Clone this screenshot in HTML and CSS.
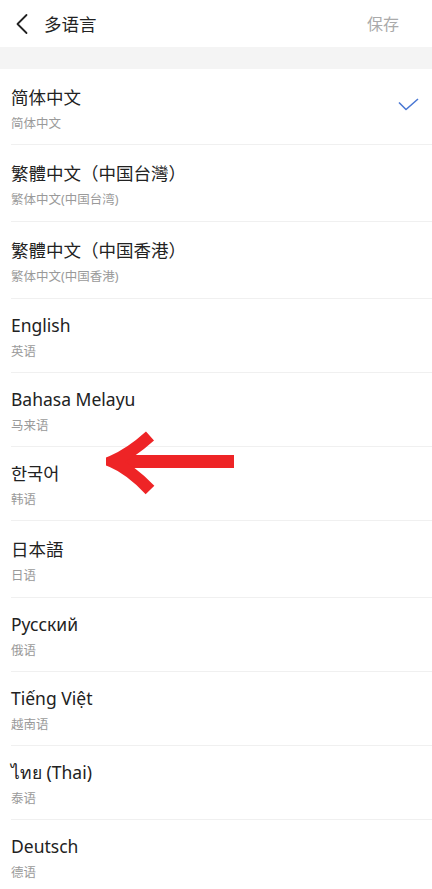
FILE: index.html
```html
<!DOCTYPE html>
<html lang="zh-CN">
<head>
<meta charset="utf-8">
<title>多语言</title>
<link rel="stylesheet" href="styles.css">
</head>
<body>
<div class="page">
  <header class="header">
    <div class="header-left">
      <svg class="back" width="14" height="22" viewBox="0 0 14 22"><polyline points="11.5,2 2.5,11 11.5,20" fill="none" stroke="#222" stroke-width="1.8" stroke-linecap="round" stroke-linejoin="round"/></svg>
      <span class="header-title">多语言</span>
    </div>
    <span class="save">保存</span>
  </header>
  <div class="band"></div>
  <ul class="list">
    <li class="row row--first">
      <div class="texts"><div class="name">简体中文</div><div class="sub">简体中文</div></div>
      <svg class="check" width="22" height="14" viewBox="0 0 22 14"><polyline points="1,4.5 8,11.5 20,1" fill="none" stroke="#4a78d4" stroke-width="1.6" stroke-linejoin="round"/></svg>
    </li>
    <li class="row row--tall"><div class="texts"><div class="name">繁體中文（中国台灣）</div><div class="sub">繁体中文(中国台湾)</div></div></li>
    <li class="row row--tall"><div class="texts"><div class="name">繁體中文（中国香港）</div><div class="sub">繁体中文(中国香港)</div></div></li>
    <li class="row"><div class="texts"><div class="name">English</div><div class="sub">英语</div></div></li>
    <li class="row"><div class="texts"><div class="name">Bahasa Melayu</div><div class="sub">马来语</div></div></li>
    <li class="row"><div class="texts"><div class="name">한국어</div><div class="sub">韩语</div></div></li>
    <li class="row row--tall"><div class="texts"><div class="name">日本語</div><div class="sub">日语</div></div></li>
    <li class="row"><div class="texts"><div class="name">Русский</div><div class="sub">俄语</div></div></li>
    <li class="row"><div class="texts"><div class="name">Tiếng Việt</div><div class="sub">越南语</div></div></li>
    <li class="row"><div class="texts"><div class="name">ไทย (Thai)</div><div class="sub">泰语</div></div></li>
    <li class="row"><div class="texts"><div class="name">Deutsch</div><div class="sub">德语</div></div></li>
  </ul>
  <svg class="arrow" width="132" height="66" viewBox="0 0 132 66">
    <rect x="6" y="25" width="122" height="13" fill="#ee2426"/>
    <path d="M44 6 Q24 24 6 31.5 Q24 39 44 60" fill="none" stroke="#ee2426" stroke-width="12"/>
  </svg>
</div>
</body>
</html>
```

FILE: styles.css
```css
* { box-sizing: border-box; }
html, body { margin: 0; padding: 0; background: #fff; }
body {
  font-family: "Noto Sans", "Noto Sans CJK SC", sans-serif;
  color: #222;
  overflow: hidden;
}
.page { position: relative; width: 432px; height: 889px; overflow: hidden; }
.header {
  height: 47px;
  display: flex;
  align-items: center;
  justify-content: space-between;
  padding: 0 33px 0 15px;
}
.header-left { display: flex; align-items: center; gap: 15px; }
.back { display: block; margin-top: 1px; }
.header-title { font-size: 17.5px; line-height: 24px; color: #222; }
.save { font-size: 16px; color: #aaa; line-height: 22px; }
.band { height: 22px; background: #f4f4f4; }
.list { list-style: none; margin: 0; padding: 0; }
.row {
  display: flex;
  align-items: center;
  justify-content: space-between;
  padding: 14px 12px 11px 0;
  margin-left: 11px;
  border-bottom: 1px solid #f0f0f0;
}
.row--first { padding-top: 16px; padding-bottom: 11px; }
.row--tall { padding-top: 16px; padding-bottom: 12px; }
.texts { display: flex; flex-direction: column; gap: 6px; }
.name { font-size: 17.5px; line-height: 24px; color: #222; }
.sub { font-size: 12.5px; line-height: 18px; color: #9a9a9a; }
.check { display: block; margin-top: -9px; }
.arrow { position: absolute; left: 106px; top: 430px; }
```
